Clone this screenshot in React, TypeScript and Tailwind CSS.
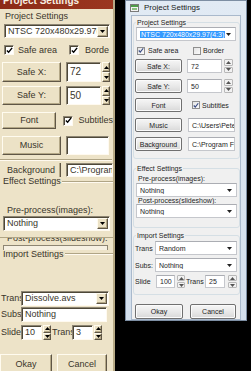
import React from "react";

type P = { children?: React.ReactNode; className?: string };

const Down = ({ c = "#000" }: { c?: string }) => (
  <svg width="5" height="3" viewBox="0 0 5 3">
    <path d="M0 0h5L2.5 3z" fill={c} />
  </svg>
);
const Up = ({ c = "#000" }: { c?: string }) => (
  <svg width="5" height="3" viewBox="0 0 5 3">
    <path d="M0 3h5L2.5 0z" fill={c} />
  </svg>
);
const Tick = ({ c = "#000", s = 8 }: { c?: string; s?: number }) => (
  <svg width={s} height={s} viewBox="0 0 8 8">
    <path d="M1 4l2 2 4-5" stroke={c} strokeWidth="1.6" fill="none" />
  </svg>
);

/* ---------- old (classic, beige) window ---------- */

function XpBtn({ children, className = "" }: P) {
  return (
    <div
      className={`flex items-center justify-center border border-t-[#fffbef] border-l-[#fffbef] border-r-[#5f5646] border-b-[#5f5646] bg-[#ece2c6] shadow-[inset_-1px_-1px_0_#b4a887] ${className}`}
    >
      {children}
    </div>
  );
}

function XpField({ children, className = "" }: P) {
  return (
    <div
      className={`flex items-center overflow-hidden whitespace-nowrap border border-t-[#8d8573] border-l-[#8d8573] border-r-[#fffaf0] border-b-[#fffaf0] bg-white pl-[3px] shadow-[inset_1px_1px_0_#4d4738] ${className}`}
    >
      {children}
    </div>
  );
}

function XpSpin({ className = "" }: P) {
  return (
    <div className={`flex flex-col ${className}`}>
      <XpBtn className="flex-1">
        <Up />
      </XpBtn>
      <XpBtn className="flex-1">
        <Down />
      </XpBtn>
    </div>
  );
}

function XpSelect({ text, className = "" }: { text: string; className?: string }) {
  return (
    <XpField className={`pr-[1px] ${className}`}>
      <span className="flex-1 overflow-hidden">{text}</span>
      <XpBtn className="h-[11px] w-[11px] shrink-0">
        <Down />
      </XpBtn>
    </XpField>
  );
}

function XpCheck() {
  return (
    <div className="flex h-[10px] w-[10px] shrink-0 items-center justify-center border border-t-[#8d8573] border-l-[#8d8573] border-r-[#fffaf0] border-b-[#fffaf0] bg-white shadow-[inset_1px_1px_0_#4d4738]">
      <Tick s={7} />
    </div>
  );
}

function Etched({ className = "" }: P) {
  return <div className={`h-[2px] border-t border-t-[#b0a586] border-b border-b-[#fffaf0] ${className}`} />;
}

function OldWindow() {
  return (
    <div className="flex h-[371px] w-[115px] shrink-0 flex-col overflow-hidden border-r-2 border-r-[#b7aa86] bg-[#ede3c8] font-['Liberation_Sans',Arial,sans-serif] text-[9px] leading-none text-[#3a352b]">
      <div className="h-[9px] shrink-0 overflow-hidden bg-gradient-to-r from-[#8c2a17] to-[#9b3720]">
        <div className="-mt-[5px] whitespace-nowrap pl-[3px] text-[10px] font-bold leading-[12px] text-[#f7eee2]">
          Project Settings
        </div>
      </div>

      <div className="mt-[3px] h-[9px] pl-[5px] leading-[9px]">Project Settings</div>
      <XpSelect text="NTSC 720x480x29.97(4:3)" className="ml-[4px] mt-[3px] h-[14px] w-[106px] shrink-0" />

      <div className="mt-[7px] flex h-[10px] shrink-0 items-center">
        <div className="ml-[4px]">
          <XpCheck />
        </div>
        <span className="ml-[4px] w-[51px]">Safe area</span>
        <XpCheck />
        <span className="ml-[6px] w-[24px] overflow-hidden whitespace-nowrap">Border</span>
      </div>

      <div className="mt-[7px] flex h-[20px] shrink-0">
        <XpBtn className="ml-[2px] w-[59px]">Safe X:</XpBtn>
        <XpField className="ml-[5px] w-[35px] text-[10px]">72</XpField>
        <XpSpin className="ml-[1px] w-[8px]" />
      </div>
      <div className="mt-[4px] flex h-[19px] shrink-0">
        <XpBtn className="ml-[2px] w-[59px]">Safe Y:</XpBtn>
        <XpField className="ml-[5px] w-[35px] text-[10px]">50</XpField>
        <XpSpin className="ml-[1px] w-[8px]" />
      </div>
      <div className="mt-[7px] flex h-[17px] shrink-0 items-center">
        <XpBtn className="ml-[2px] h-full w-[59px]">Font</XpBtn>
        <div className="ml-[7px]">
          <XpCheck />
        </div>
        <span className="ml-[5px] whitespace-nowrap">Subtitles</span>
      </div>
      <div className="mt-[7px] flex h-[19px] shrink-0">
        <XpBtn className="ml-[2px] w-[59px]">Music</XpBtn>
        <XpField className="ml-[5px] w-[43px]" />
      </div>

      <Etched className="mt-[4px] w-[112px] shrink-0" />

      <div className="mt-[2px] flex h-[14px] shrink-0">
        <div className="ml-[2px] flex w-[59px] items-end justify-center border-r border-r-[#5f5646] pb-[2px] shadow-[inset_-1px_0_0_#b4a887]">
          Background
        </div>
        <XpField className="ml-[5px] w-[47px]">C:\Program Files</XpField>
      </div>

      <div className="flex h-[9px] shrink-0 items-center">
        <span className="pl-[3px] pr-[1px]">Effect Settings</span>
        <Etched className="flex-1" />
      </div>

      <div className="mt-[20px] h-[9px] shrink-0 pl-[7px] leading-[9px]">Pre-process(images):</div>
      <XpSelect text="Nothing" className="ml-[3px] mt-[1px] h-[15px] w-[107px] shrink-0" />

      <div className="mt-[6px] h-[8px] shrink-0 overflow-hidden border-t border-t-[#b0a586]">
        <div className="-mt-[4px] whitespace-nowrap pl-[7px] leading-[9px]">Post-process(slideshow):</div>
      </div>
      <div className="ml-[3px] h-[5px] w-[105px] shrink-0 border border-b-0 border-[#8d8573] bg-[#f6f0e2]" />

      <div className="flex h-[8px] shrink-0 items-center">
        <span className="pl-[3px] pr-[1px]">Import Settings</span>
        <Etched className="flex-1" />
      </div>

      <div className="mt-[33px] flex h-[15px] shrink-0 items-center">
        <span className="w-[21px] overflow-hidden pl-[1px]">Trans</span>
        <XpSelect text="Dissolve.avs" className="h-full w-[88px]" />
      </div>
      <div className="mt-[1px] flex h-[15px] shrink-0 items-center">
        <span className="w-[21px] overflow-hidden pl-[1px]">Subs</span>
        <XpField className="h-full w-[86px]">Nothing</XpField>
      </div>
      <div className="mt-[3px] flex h-[15px] shrink-0 items-center">
        <span className="w-[21px] overflow-hidden pl-[1px]">Slide</span>
        <XpField className="h-full w-[21px]">10</XpField>
        <XpSpin className="ml-[1px] h-full w-[8px]" />
        <span className="w-[21px] overflow-hidden pl-[1px]">Trans</span>
        <XpField className="h-full w-[21px]">3</XpField>
        <XpSpin className="ml-[1px] h-full w-[8px]" />
      </div>

      <div className="mt-[14px] flex h-[20px] shrink-0">
        <XpBtn className="w-[52px]">Okay</XpBtn>
        <XpBtn className="ml-[5px] w-[50px]">Cancel</XpBtn>
      </div>
    </div>
  );
}

/* ---------- Windows 7 window ---------- */

function W7Btn({ children, className = "" }: P) {
  return (
    <div
      className={`flex items-center justify-center rounded-[2px] border border-[#707070] bg-gradient-to-b from-[#f6f6f6] via-[#e9e9e9] to-[#d8d8d8] shadow-[inset_0_0_0_1px_#fbfbfb] ${className}`}
    >
      {children}
    </div>
  );
}

function W7Field({ children, className = "" }: P) {
  return (
    <div
      className={`flex items-center overflow-hidden whitespace-nowrap border border-[#c5c7cc] border-t-[#abadb3] bg-white pl-[3px] ${className}`}
    >
      {children}
    </div>
  );
}

function W7Select({ children, className = "" }: P) {
  return (
    <W7Field className={`pr-[4px] ${className}`}>
      <span className="flex-1 overflow-hidden">{children}</span>
      <Down c="#222" />
    </W7Field>
  );
}

function W7Spin({ className = "" }: P) {
  return (
    <div className={`flex flex-col gap-[1px] ${className}`}>
      <div className="flex flex-1 items-center justify-center rounded-[1px] border border-[#b8b8b8] bg-[#f2f2f2]">
        <Up c="#555" />
      </div>
      <div className="flex flex-1 items-center justify-center rounded-[1px] border border-[#b8b8b8] bg-[#f2f2f2]">
        <Down c="#555" />
      </div>
    </div>
  );
}

function W7Check() {
  return (
    <div className="flex h-[8px] w-[8px] shrink-0 items-center justify-center border border-[#8f8f8f] bg-gradient-to-br from-[#e4e4e4] to-[#fafafa]">
      <Tick c="#3d4f86" s={7} />
    </div>
  );
}

function W7Group({ label, children, className = "" }: P & { label: string }) {
  return (
    <div className={`relative flex shrink-0 flex-col rounded-[3px] border border-[#d5dfe5] ${className}`}>
      <span className="absolute -top-[5px] left-[2px] bg-[#f0f0f0] px-[1px] leading-[9px]">{label}</span>
      {children}
    </div>
  );
}

function NewWindow() {
  return (
    <div className="flex h-[321px] w-[122px] shrink-0 flex-col border border-[#7d8ea3] bg-gradient-to-b from-[#e1eaf4] to-[#d3dfec] font-['Liberation_Sans',Arial,sans-serif] text-[7px] leading-none text-[#1e1e1e]">
      <div className="flex h-[14px] shrink-0 items-center pl-[4px]">
        <svg width="9" height="8" viewBox="0 0 9 8">
          <rect x="0.5" y="0.5" width="8" height="7" fill="#f4f4f4" stroke="#7a7a7a" />
          <rect x="1" y="1" width="7" height="2" fill="#4f9d4a" />
          <rect x="2" y="4" width="5" height="2" fill="#8cc083" />
        </svg>
        <span className="ml-[5px] text-[8px] text-[#1a1a1a]">Project Settings</span>
      </div>

      <div className="mx-[5px] flex flex-1 flex-col border border-[#a9b9cc] bg-[#f0f0f0]">
        <W7Group label="Project Settings" className="ml-[1px] mt-[6px] h-[137px] w-[107px]">
          <W7Field className="ml-[2px] mt-[4px] h-[14px] w-[100px] pl-[1px] pr-[4px]">
            <span className="flex-1 overflow-hidden">
              <span className="bg-[#3399ff] px-[1px] text-white">NTSC 720x480x29.97(4:3)</span>
            </span>
            <Down c="#222" />
          </W7Field>
          <div className="mt-[5px] flex h-[9px] items-center">
            <div className="ml-[3px]">
              <W7Check />
            </div>
            <span className="ml-[3px] w-[45px]">Safe area</span>
            <div className="h-[8px] w-[8px] border border-[#8f8f8f] bg-gradient-to-br from-[#e4e4e4] to-[#fafafa]" />
            <span className="ml-[2px]">Border</span>
          </div>
          <div className="mt-[4px] flex h-[14px]">
            <W7Btn className="ml-[1px] w-[47px]">Safe X:</W7Btn>
            <W7Field className="ml-[5px] w-[35px]">72</W7Field>
            <W7Spin className="ml-[2px] w-[9px]" />
          </div>
          <div className="mt-[6px] flex h-[14px]">
            <W7Btn className="ml-[1px] w-[47px]">Safe Y:</W7Btn>
            <W7Field className="ml-[5px] w-[35px]">50</W7Field>
            <W7Spin className="ml-[2px] w-[9px]" />
          </div>
          <div className="mt-[5px] flex h-[14px] items-center">
            <W7Btn className="ml-[1px] h-full w-[47px]">Font</W7Btn>
            <div className="ml-[10px]">
              <W7Check />
            </div>
            <span className="ml-[2px]">Subtitles</span>
          </div>
          <div className="mt-[6px] flex h-[14px]">
            <W7Btn className="ml-[1px] w-[47px]">Music</W7Btn>
            <W7Field className="ml-[6px] w-[47px]">C:\Users\Peter</W7Field>
          </div>
          <div className="mt-[5px] flex h-[14px]">
            <W7Btn className="ml-[1px] w-[47px]">Background</W7Btn>
            <W7Field className="ml-[6px] w-[47px]">C:\Program Files</W7Field>
          </div>
        </W7Group>

        <W7Group label="Effect Settings" className="ml-[1px] mt-[9px] h-[60px] w-[107px]">
          <div className="ml-[4px] mt-[5px] h-[9px] leading-[9px]">Pre-process(images):</div>
          <W7Select className="ml-[2px] h-[14px] w-[101px]">Nothing</W7Select>
          <div className="ml-[4px] h-[7px] overflow-hidden leading-[8px]">Post-process(slideshow):</div>
          <W7Select className="ml-[2px] h-[14px] w-[101px]">Nothing</W7Select>
        </W7Group>

        <W7Group label="Import Settings" className="ml-[1px] mt-[7px] h-[60px] w-[107px]">
          <div className="mt-[5px] flex h-[14px] items-center">
            <span className="w-[21px] pl-[1px]">Trans</span>
            <W7Select className="h-full w-[82px]">Random</W7Select>
          </div>
          <div className="mt-[3px] flex h-[14px] items-center">
            <span className="w-[21px] pl-[1px]">Subs:</span>
            <W7Select className="h-full w-[82px]">Nothing</W7Select>
          </div>
          <div className="mt-[3px] flex h-[13px] items-center">
            <span className="w-[22px] pl-[1px]">Slide</span>
            <W7Field className="h-full w-[19px]">100</W7Field>
            <W7Spin className="ml-[2px] h-full w-[8px]" />
            <span className="w-[20px] overflow-hidden pl-[1px]">Trans</span>
            <W7Field className="h-full w-[20px]">25</W7Field>
            <W7Spin className="ml-[3px] h-full w-[9px]" />
          </div>
        </W7Group>

        <div className="mt-[9px] flex h-[15px] shrink-0">
          <W7Btn className="ml-[3px] w-[48px]">Okay</W7Btn>
          <W7Btn className="ml-[7px] w-[46px]">Cancel</W7Btn>
        </div>
      </div>
      <div className="h-[4px] shrink-0" />
    </div>
  );
}

export default function App() {
  return (
    <div className="flex h-[371px] w-[251px] items-start overflow-hidden bg-black">
      <OldWindow />
      <div className="w-[10px] shrink-0" />
      <NewWindow />
    </div>
  );
}
